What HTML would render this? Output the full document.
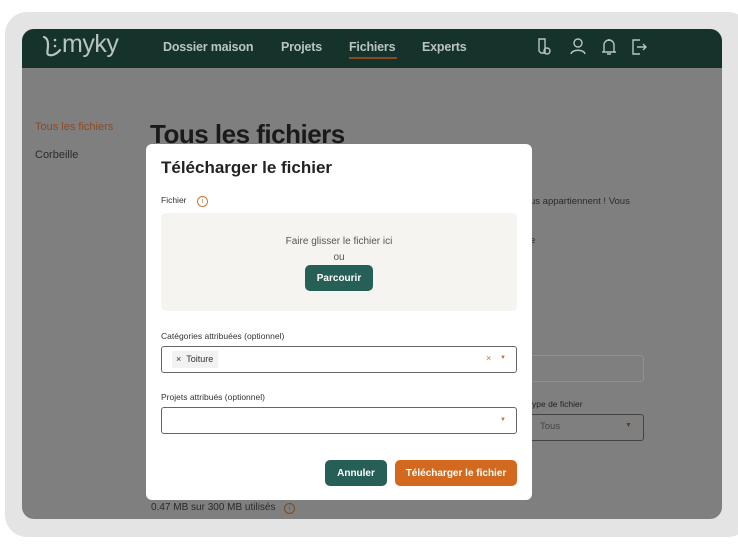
<!DOCTYPE html>
<html><head><meta charset="utf-8"><style>
*{margin:0;padding:0;box-sizing:border-box}
body{width:738px;height:554px;background:#fff;position:relative;overflow:hidden;font-family:"Liberation Sans",sans-serif}
.frame{position:absolute;left:5px;top:12px;width:745px;height:525px;background:#e4e4e4;border-radius:22px}
.screen{position:absolute;left:22px;top:29px;width:700px;height:490px;background:#7f7f7f;border-radius:12px;overflow:hidden}
.hdr{position:absolute;left:0;top:0;width:700px;height:39px;background:#15332b}
.a{position:absolute;white-space:nowrap}
.nav{color:#b9c4c0;font-weight:bold;font-size:12.5px;top:11px;letter-spacing:-0.2px}
.modal{position:absolute;left:146px;top:144px;width:386px;height:356px;background:#fff;border-radius:6px}
.lbl{font-size:8.5px;color:#333}
.sel{position:absolute;left:15px;width:356px;height:27px;border:1px solid #666;border-radius:3px;background:#fff}
.btn{position:absolute;border-radius:5px;color:#fff;font-weight:bold;font-size:10px;display:flex;align-items:center;justify-content:center}
</style></head><body>
<div class="frame"></div>
<div class="screen">
 <div class="hdr">
  <svg style="position:absolute;left:18px;top:5px" width="22" height="24" fill="none" stroke="#b9c4c0" stroke-width="2.2" stroke-linecap="round"><path d="M4 3c3 1 4 4 4 8 0 6-2 9 1 10 3 1 8-1 11-5"/><circle cx="15" cy="6" r="1.3" fill="#b9c4c0" stroke="none"/><circle cx="15" cy="12" r="1.3" fill="#b9c4c0" stroke="none"/></svg>
  <div class="a" style="left:40px;top:1px;color:#b9c4c0;font-size:25px;letter-spacing:-0.5px">myky</div>
  <div class="a nav" style="left:141px">Dossier maison</div>
  <div class="a nav" style="left:259px">Projets</div>
  <div class="a nav" style="left:327px">Fichiers</div>
  <div style="position:absolute;left:327px;top:28px;width:48px;height:2px;background:#8a4a1e"></div>
  <div class="a nav" style="left:400px">Experts</div>
  <svg style="position:absolute;left:514px;top:8px" width="120" height="20" fill="none" stroke="#b9c4c0" stroke-width="1.4">
   <path d="M3 2h6v14H5l-2-2z"/><circle cx="11" cy="14" r="3"/>
   <circle cx="42" cy="6" r="4"/><path d="M35 17c1-5 13-5 14 0"/>
   <path d="M68 15V8a5 5 0 0 1 10 0v7zM66 15h14M73 2v2M71 17h4"/>
   <path d="M104 3h-7v14h7M101 10h9M107 7l3 3-3 3"/>
  </svg>
 </div>
 <div class="a" style="left:13px;top:92px;color:#8a4a26;font-size:11px">Tous les fichiers</div>
 <div class="a" style="left:13px;top:120px;color:#2b2b2b;font-size:11px">Corbeille</div>
 <div class="a" style="left:128px;top:90px;color:#1a1a1a;font-size:26px;font-weight:bold;letter-spacing:-0.5px">Tous les fichiers</div>
 <div class="a" style="left:508px;top:167px;color:#2b2b2b;font-size:9.5px">us appartiennent ! Vous</div>
 <div class="a" style="left:508px;top:206px;color:#2b2b2b;font-size:9.5px">e</div>
 <div style="position:absolute;left:500px;top:326px;width:122px;height:27px;border:1px solid #909090;border-radius:3px"></div>
 <div class="a" style="left:510px;top:370px;color:#222;font-size:8.5px">ype de fichier</div>
 <div style="position:absolute;left:500px;top:385px;width:122px;height:27px;border:1px solid #444;border-radius:3px"></div>
 <div class="a" style="left:518px;top:392px;color:#444;font-size:9.5px">Tous</div>
 <div class="a" style="left:603px;top:393px;color:#6a3a1a;font-size:7px">▼</div>
 <div class="a" style="left:129px;top:473px;color:#2a2a2a;font-size:10px">0.47 MB sur 300 MB utilisés <span style="display:inline-block;width:11px;height:11px;border:1px solid #7a4a20;border-radius:50%;font-size:7px;text-align:center;line-height:9px;color:#7a4a20;margin-left:6px">i</span></div>
</div>
<div class="modal">
 <div class="a" style="left:15px;top:14px;font-size:17px;font-weight:bold;color:#222">Télécharger le fichier</div>
 <div class="a lbl" style="left:15px;top:51px">Fichier <span style="display:inline-block;width:11px;height:11px;border:1px solid #c07a40;border-radius:50%;font-size:7px;text-align:center;line-height:9px;color:#c07a40;margin-left:8px">i</span></div>
 <div style="position:absolute;left:15px;top:69px;width:356px;height:98px;background:#f5f4f1;border-radius:5px"></div>
 <div class="a" style="left:0;width:386px;text-align:center;top:92px;font-size:10px;color:#555">Faire glisser le fichier ici</div>
 <div class="a" style="left:0;width:386px;text-align:center;top:108px;font-size:10px;color:#555">ou</div>
 <div class="btn" style="left:159px;top:121px;width:68px;height:26px;background:#265f56">Parcourir</div>
 <div class="a lbl" style="left:15px;top:187px">Catégories attribuées (optionnel)</div>
 <div class="sel" style="top:202px">
  <div style="position:absolute;left:10px;top:4px;width:46px;height:17px;background:#f2f2f2;font-size:9px;color:#333;line-height:17px;padding-left:4px">× &nbsp;Toiture</div>
  <div class="a" style="left:324px;top:6px;color:#c8703a;font-size:9px">×</div>
  <div class="a" style="left:338px;top:8px;color:#c8703a;font-size:6px">▼</div>
 </div>
 <div class="a lbl" style="left:15px;top:248px">Projets attribués (optionnel)</div>
 <div class="sel" style="top:263px"><div class="a" style="left:338px;top:9px;color:#c8703a;font-size:6px">▼</div></div>
 <div class="btn" style="left:179px;top:316px;width:62px;height:26px;background:#265f56">Annuler</div>
 <div class="btn" style="left:249px;top:316px;width:122px;height:26px;background:#d2691e">Télécharger le fichier</div>
</div>
</body></html>
